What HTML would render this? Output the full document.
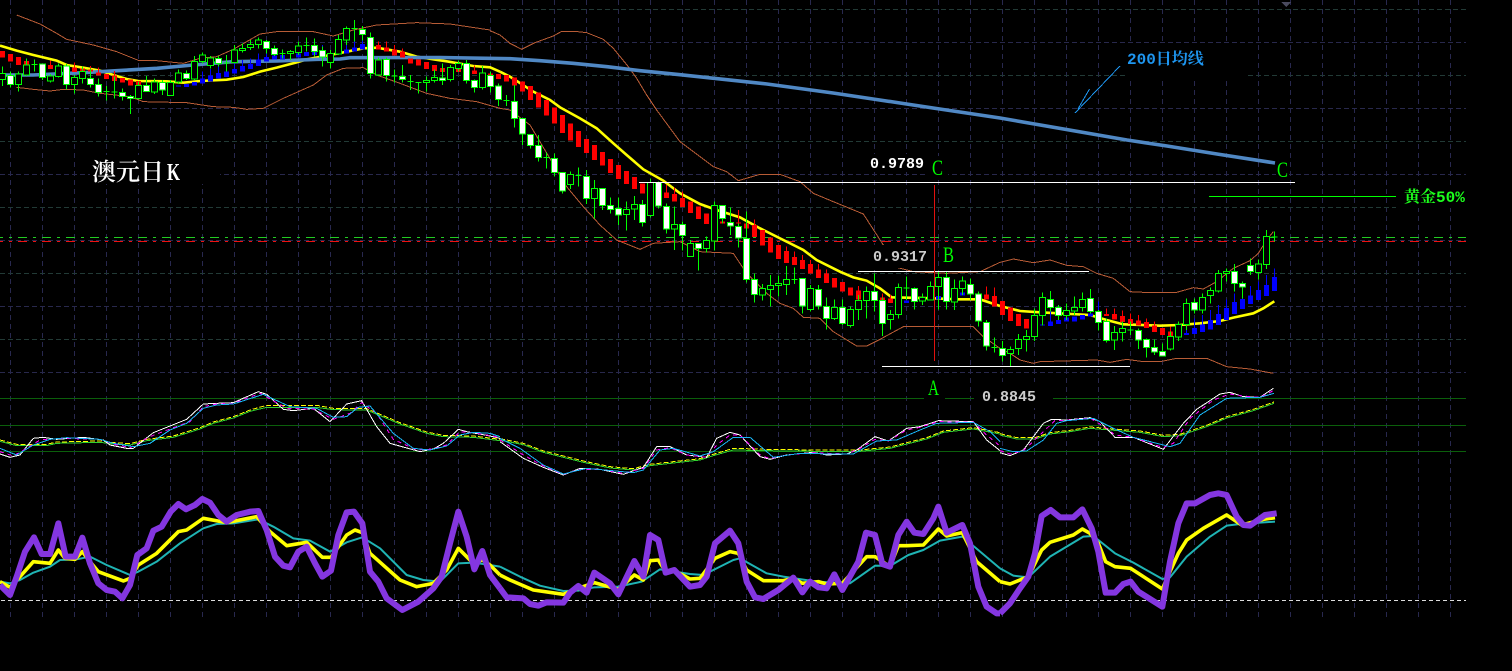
<!DOCTYPE html>
<html lang="zh">
<head>
<meta charset="utf-8">
<title>澳元日K</title>
<style>
html,body{margin:0;padding:0;background:#000;width:1512px;height:671px;overflow:hidden}
svg{display:block;position:absolute;left:0;top:0}
.z *{vector-effect:non-scaling-stroke}
.l{fill:none}
text{white-space:pre}
</style>
</head>
<body>
<svg width="1512" height="671" viewBox="0 0 1512 671" shape-rendering="crispEdges" xmlns="http://www.w3.org/2000/svg">
<rect width="1512" height="671" fill="#000"/>

<!-- grid -->
<path fill="none" stroke="#28284e" stroke-width="1" stroke-dasharray="5 4" d="M10.5 0V620M42.5 0V620M74.5 0V620M106.5 0V620M138.5 0V620M170.5 0V620M202.5 0V620M234.5 0V620M266.5 0V620M298.5 0V620M330.5 0V620M362.5 0V620M394.5 0V620M426.5 0V620M458.5 0V620M490.5 0V620M522.5 0V620M554.5 0V620M586.5 0V620M618.5 0V620M650.5 0V620M682.5 0V620M714.5 0V620M746.5 0V620M778.5 0V620M810.5 0V620M842.5 0V620M874.5 0V620M906.5 0V620M938.5 0V620M970.5 0V620M1002.5 0V620M1034.5 0V620M1066.5 0V620M1098.5 0V620M1130.5 0V620M1162.5 0V620M1194.5 0V620M1226.5 0V620M1258.5 0V620M1290.5 0V620M1322.5 0V620M1354.5 0V620M1386.5 0V620M1418.5 0V620M1450.5 0V620"/>
<path fill="none" stroke="#223a36" stroke-width="1" stroke-dasharray="5 3" d="M157 9.5H1466M0 75.5H1466M0 141.5H1466M0 207.5H1466M0 273.5H1466M0 339.5H1466"/>
<path fill="none" stroke="#28284c" stroke-width="1" stroke-dasharray="5 3" d="M0 42.5H1466M0 108.5H1466M0 174.5H1466M0 240.5H1466M0 306.5H1466M0 372.5H1466"/>

<!-- indicator-pane horizontals -->
<path fill="none" stroke="#0b5f0b" stroke-width="1" d="M0 398.5H1466M0 425.5H1466M0 451.5H1466"/>
<path fill="none" stroke="#ddd" stroke-width="1" stroke-dasharray="4 3" d="M1 600.5H1466"/>
<path fill="none" stroke="#22cc22" stroke-width="1" stroke-dasharray="9 6 3 6" stroke-dashoffset="6" d="M0 237.5H1466"/>
<path fill="none" stroke="#ee1111" stroke-width="1" stroke-dasharray="9 6 3 6" stroke-dashoffset="6" d="M0 241.5H1466"/>

<!-- Bollinger bands -->
<g class="z" stroke="#b85c36" stroke-width="1" fill="none">
<g transform="scale(.33333)">
<polyline points="50,45 120,72 170,100 200,118 280,135 350,155 415,181 470,182 550,190 600,175 650,170 700,148 780,102 830,95 940,95 1000,108 1060,90 1130,75 1250,68 1350,72 1470,90"/>
<polyline points="50,262 100,268 150,273 190,268 250,270 300,280 390,290 430,305 560,308 640,320 700,322 740,328 790,325 850,295 940,255 980,225 1030,205 1090,203 1130,225 1200,250 1280,280 1350,295 1430,305 1500,325"/>
</g>
<g transform="translate(440 0) scale(.33333)">
<polyline points="150,92 180,105 210,130 245,148 285,128 340,108 365,94 405,94 440,98 490,118 520,145 565,200 590,235 620,285 650,330"/>
</g>
<g transform="translate(500 60) scale(.33333)">
<polyline points="470,150 540,245 640,320 680,335 715,362 780,343 840,343 900,365 940,400 1000,425 1090,462 1150,555 1190,622 1240,635 1340,640 1440,635 1500,607"/>
<polyline points="0,145 30,150 90,195 200,380 250,440 300,495 350,540 420,568 460,550 540,545 600,575 700,580 740,640 800,700 840,730 880,745 910,772 960,775 1000,815 1070,858 1100,858 1140,838 1210,800 1300,800 1420,800 1450,830 1500,865"/>
</g>
<g transform="translate(1000 140) scale(.33333)">
<polyline points="0,367 40,357 100,368 150,360 200,376 250,380 290,400 340,415 390,455 450,458 530,457 580,443 610,447 650,425 700,385 750,362 775,340 800,300 820,275"/>
<polyline points="0,625 30,640 60,660 100,670 120,665 290,660 330,667 380,658 430,665 480,665 530,655 620,655 680,680 750,687 820,700"/>
</g>
</g>

<!-- yellow MA -->
<g class="z" stroke="#ffff00" stroke-width="2.6" fill="none" shape-rendering="auto">
<g transform="scale(.33333)"><polyline points="0,137 50,152 100,165 170,182 200,195 250,203 300,212 340,225 380,237 415,243 500,244 550,248 600,243 680,239 730,231 780,215 830,203 890,187 920,178 990,165 1040,155 1090,145 1130,143 1200,155 1250,170 1300,178 1340,184 1420,198 1470,202 1500,215"/></g>
<g transform="translate(500 60) scale(.33333)"><polyline points="0,35 30,50 100,95 150,120 180,142 240,175 290,205 340,250 380,285 430,328 490,362 540,400 600,432 650,450 720,472 780,505 850,540 910,570 950,600 1020,635 1060,652 1100,662 1140,685 1175,712 1300,715 1370,718 1440,718 1500,738"/></g>
<g transform="translate(1000 140) scale(.33333)"><polyline points="0,498 60,513 120,517 270,525 320,540 370,553 480,557 540,555 600,550 660,543 700,533 760,520 790,505 823,484"/></g>
</g>

<!-- 200 day MA -->
<polyline fill="none" stroke="#5088c4" stroke-width="3.6" shape-rendering="auto" points="0,75 33,75 83,72.7 117,70.7 157,68.3 193,65 233,61.7 277,61 317,59.3 340,59 350,57.7 440,57.5 510,58.7 540,60.7 573,63.3 607,66.7 640,70.7 680,74.7 767,84 833,93 900,103 933,108 1000,118 1127,140 1167,146 1217,154 1275,163"/>

<!-- red / blue blocks and candles -->
<g class="z">
<g transform="scale(.33333)">
<path fill="none" stroke="#f00" d="M79.5 175V183M103.5 178V190M151.5 182V195M223.5 188V203M271.5 198V208M295.5 203V218M343.5 213V227M1135.5 125V135M1159.5 125V142M1183.5 135V148M1207.5 145V155M1327.5 190V204M1375.5 190V207M1423.5 197V212M1447.5 198V218M1471.5 215V220"/>
<path fill="#f00" d="M0 153h15V173h-15zM24 162h15V185h-15zM48 171h15V195h-15zM72 183h15V195h-15zM144 195h15V207h-15zM216 203h15V216h-15zM240 205h15V213h-15zM264 208h15V215h-15zM288 218h15V227h-15zM312 222h15V237h-15zM336 227h15V243h-15zM360 234h15V248h-15zM384 238h15V257h-15zM408 243h15V255h-15zM1128 135h15V148h-15zM1152 142h15V155h-15zM1176 148h15V167h-15zM1200 155h15V172h-15zM1224 176h15V190h-15zM1248 178h15V197h-15zM1272 186h15V207h-15zM1296 195h15V213h-15zM1320 204h15V216h-15zM1368 207h15V216h-15zM1416 212h15V222h-15zM1440 218h15V225h-15zM1464 220h15V228h-15zM1488 222h15V237h-15z"/>
<path fill="none" stroke="#00f" d="M607.5 215V235M631.5 207V226M655.5 195V219M679.5 190V214M703.5 190V207M727.5 180V198M751.5 175V192M775.5 160V178M799.5 160V171M847.5 148V165M967.5 135V150M943.5 130V155M1039.5 130V148M1063.5 120V142M1087.5 122V132"/>
<path fill="#00f" d="M528 257h15V260h-15zM552 252h15V261h-15zM576 246h15V257h-15zM600 235h15V251h-15zM624 226h15V245h-15zM648 219h15V236h-15zM672 214h15V231h-15zM696 207h15V221h-15zM720 198h15V215h-15zM744 192h15V207h-15zM768 178h15V198h-15zM792 171h15V185h-15zM816 167h15V178h-15zM840 165h15V178h-15zM888 160h15V172h-15zM912 156h15V168h-15zM936 155h15V165h-15zM960 150h15V165h-15zM1032 148h15V160h-15zM1056 142h15V155h-15zM1080 132h15V148h-15z"/>
<path fill="none" stroke="#0f0" d="M7.5 200V258M31.5 215V262M55.5 215V275M79.5 175V228M103.5 178V215M127.5 190V240M151.5 222V248M175.5 190V232M199.5 192V268M223.5 225V280M247.5 200V250M271.5 205V262M295.5 235V290M319.5 258V302M343.5 230V296M367.5 265V302M391.5 285V342M415.5 245V298M439.5 228V275M463.5 235V282M487.5 240V285M511.5 240V288M535.5 208V252M559.5 212V240M583.5 168V240M607.5 158V190M631.5 168V205M655.5 168V200M679.5 165V215M703.5 135V190M727.5 130V158M751.5 120V150M775.5 112V145M799.5 120V160M823.5 136V168M847.5 148V175M871.5 150V180M895.5 125V165M919.5 112V155M943.5 115V170M967.5 140V200M991.5 150V205M1015.5 105V165M1039.5 80V135M1063.5 60V125M1087.5 78V122M1111.5 97V235M1135.5 172V228M1159.5 172V245M1183.5 208V248M1207.5 195V248M1231.5 225V270M1255.5 246V280M1279.5 230V275M1303.5 208V248M1327.5 190V255M1351.5 195V245M1375.5 182V215M1399.5 180V250M1423.5 238V278M1447.5 198V268M1471.5 215V278M1495.5 250V318"/>
<path fill="#000" stroke="#0f0" d="M-1.5 220h18V238h-18zM46.5 222h18V254h-18zM70.5 195h18V225h-18zM142.5 228h18V243h-18zM166.5 198h18V230h-18zM214.5 233h18V254h-18zM238.5 214h18V235h-18zM406.5 256h18V296h-18zM454.5 246h18V276h-18zM502.5 247h18V287h-18zM526.5 219h18V246h-18zM574.5 184h18V237h-18zM598.5 165h18V185h-18zM622.5 174h18V197h-18zM694.5 150h18V188h-18zM718.5 145h18V152h-18zM742.5 134h18V142h-18zM766.5 120h18V133h-18zM862.5 154h18V160h-18zM886.5 138h18V158h-18zM982.5 160h18V188h-18zM1006.5 118h18V162h-18zM1030.5 85h18V120h-18zM1126.5 180h18V225h-18zM1270.5 241h18V247h-18zM1294.5 232h18V242h-18zM1342.5 202h18V239h-18zM1366.5 190h18V205h-18zM1438.5 219h18V263h-18z"/>
<path fill="#fff" stroke="#0f0" d="M22.5 226h18V254h-18zM118.5 192h18V232h-18zM190.5 198h18V254h-18zM262.5 235h18V254h-18zM286.5 253h18V278h-18zM358.5 278h18V290h-18zM382.5 289h18V295h-18zM430.5 256h18V275h-18zM478.5 247h18V270h-18zM550.5 220h18V236h-18zM646.5 176h18V191h-18zM790.5 124h18V146h-18zM814.5 145h18V164h-18zM934.5 136h18V154h-18zM958.5 151h18V171h-18zM1078.5 88h18V103h-18zM1102.5 112h18V220h-18zM1150.5 178h18V226h-18zM1198.5 229h18V239h-18zM1318.5 234h18V242h-18zM1390.5 190h18V241h-18zM1414.5 241h18V262h-18zM1462.5 226h18V260h-18zM1486.5 258h18V298h-18z"/>
<path fill="none" stroke="#0f0" d="M94.5 193h18M310.5 274h18M334.5 276h18M670.5 189h18M838.5 161h18M910.5 137h18M1054.5 86h18M1174.5 228h18M1222.5 245h18M1246.5 247h18"/>
</g>

<g transform="translate(500 60) scale(.33333)">
<path fill="none" stroke="#f00" d="M499.5 375V397M523.5 383V402M547.5 395V414M715.5 450V487M739.5 455V490M763.5 478V495M859.5 560V573M883.5 575V591M907.5 585V600M931.5 600V612M955.5 612V628M979.5 628V640M1075.5 678V692M1147.5 700V712M1171.5 705V715M1459.5 680V703M1483.5 682V708"/>
<path fill="#f00" d="M12 45h15V65h-15zM36 52h15V77h-15zM60 65h15V95h-15zM84 78h15V120h-15zM108 98h15V143h-15zM132 120h15V167h-15zM156 142h15V191h-15zM180 165h15V219h-15zM204 190h15V242h-15zM228 213h15V261h-15zM252 237h15V279h-15zM276 255h15V300h-15zM300 276h15V317h-15zM324 297h15V339h-15zM348 315h15V357h-15zM372 333h15V372h-15zM396 351h15V387h-15zM420 370h15V400h-15zM492 397h15V414h-15zM516 402h15V425h-15zM540 414h15V441h-15zM564 424h15V459h-15zM588 440h15V477h-15zM612 460h15V492h-15zM660 484h15V491h-15zM708 487h15V491h-15zM732 490h15V505h-15zM756 495h15V531h-15zM780 510h15V556h-15zM804 533h15V578h-15zM828 555h15V597h-15zM852 573h15V609h-15zM876 591h15V615h-15zM900 600h15V627h-15zM924 612h15V641h-15zM948 628h15V654h-15zM972 640h15V669h-15zM996 654h15V683h-15zM1020 666h15V695h-15zM1044 682h15V707h-15zM1068 692h15V718h-15zM1140 712h15V722h-15zM1164 715h15V729h-15zM1452 703h15V719h-15zM1476 708h15V740h-15z"/>
<path fill="none" stroke="#00f" d="M1315.5 695V708M1387.5 685V698"/>
<path fill="#00f" d="M1212 722h15V729h-15zM1308 708h15V718h-15zM1380 698h15V707h-15z"/>
<path fill="none" stroke="#0f0" d="M19.5 105V138M43.5 75V203M67.5 175V255M91.5 222V265M115.5 225V305M139.5 278V325M163.5 280V350M187.5 337V400M211.5 335V387M235.5 322V380M259.5 330V432M283.5 360V475M307.5 385V450M331.5 412V460M355.5 412V495M379.5 425V512M403.5 408V480M427.5 420V500M451.5 355V472M475.5 365V445M499.5 430V520M523.5 440V570M547.5 485V572M571.5 540V590M595.5 550V632M619.5 530V578M643.5 425V572M667.5 437V490M691.5 443V525M715.5 490V562M739.5 455V668M763.5 640V728M787.5 672V722M811.5 645V740M835.5 647V710M859.5 618V705M883.5 622V672M907.5 655V760M931.5 675V755M955.5 675V748M979.5 712V808M1003.5 718V780M1027.5 718V795M1051.5 740V802M1075.5 705V780M1099.5 680V775M1123.5 640V755M1147.5 712V828M1171.5 750V808M1195.5 670V775M1219.5 650V720M1243.5 682V748M1267.5 700V735M1291.5 665V722M1315.5 635V748M1339.5 635V748M1363.5 658V750M1387.5 650V705M1411.5 655V720M1435.5 695V800M1459.5 780V872M1483.5 832V878"/>
<path fill="#000" stroke="#0f0" d="M202.5 344h18V373h-18zM274.5 385h18V415h-18zM370.5 449h18V463h-18zM394.5 433h18V447h-18zM442.5 368h18V467h-18zM514.5 494h18V507h-18zM562.5 550h18V590h-18zM610.5 541h18V566h-18zM634.5 437h18V543h-18zM778.5 685h18V705h-18zM802.5 677h18V688h-18zM826.5 670h18V676h-18zM850.5 658h18V673h-18zM922.5 685h18V748h-18zM994.5 742h18V775h-18zM1042.5 748h18V797h-18zM1066.5 722h18V748h-18zM1090.5 695h18V722h-18zM1162.5 764h18V778h-18zM1186.5 683h18V763h-18zM1258.5 713h18V723h-18zM1282.5 680h18V720h-18zM1306.5 652h18V680h-18zM1354.5 685h18V726h-18zM1378.5 663h18V685h-18z"/>
<path fill="#fff" stroke="#0f0" d="M34.5 125h18V175h-18zM58.5 176h18V222h-18zM82.5 224h18V257h-18zM106.5 257h18V292h-18zM154.5 295h18V337h-18zM178.5 338h18V393h-18zM250.5 350h18V415h-18zM298.5 385h18V437h-18zM322.5 437h18V448h-18zM346.5 445h18V465h-18zM418.5 433h18V487h-18zM466.5 368h18V438h-18zM490.5 440h18V507h-18zM538.5 493h18V526h-18zM586.5 551h18V565h-18zM658.5 437h18V475h-18zM682.5 488h18V498h-18zM706.5 500h18V534h-18zM730.5 535h18V658h-18zM754.5 658h18V703h-18zM898.5 656h18V738h-18zM946.5 689h18V738h-18zM970.5 740h18V775h-18zM1018.5 742h18V790h-18zM1114.5 695h18V722h-18zM1138.5 722h18V790h-18zM1234.5 686h18V724h-18zM1330.5 653h18V725h-18zM1402.5 673h18V702h-18zM1426.5 702h18V783h-18zM1450.5 788h18V858h-18z"/>
<path fill="none" stroke="#0f0" d="M10.5 122h18M130.5 292h18M226.5 346h18M874.5 659h18M1210.5 684h18M1474.5 862h18"/>
</g>

<g transform="translate(1000 140) scale(.33333)">
<path fill="none" stroke="#f00" d="M319.5 505V522M343.5 505V522M367.5 512V528M391.5 520V537M415.5 525V541M439.5 535V546M463.5 545V556M511.5 560V574"/>
<path fill="#f00" d="M0 483h15V525h-15zM24 502h15V543h-15zM48 522h15V558h-15zM72 537h15V565h-15zM312 522h15V528h-15zM336 522h15V538h-15zM360 528h15V546h-15zM384 537h15V552h-15zM408 541h15V557h-15zM432 546h15V564h-15zM456 556h15V576h-15zM480 564h15V585h-15zM504 574h15V590h-15z"/>
<path fill="none" stroke="#00f" d="M127.5 540V554M151.5 515V544M295.5 485V515M559.5 550V579M583.5 535V564M607.5 525V553M631.5 510V540M655.5 495V522M679.5 478V504M703.5 460V486M727.5 450V477M751.5 438V466M775.5 425V450M799.5 405V435M823.5 385V411"/>
<path fill="#00f" d="M120 554h15V557h-15zM144 544h15V558h-15zM168 540h15V552h-15zM192 533h15V545h-15zM216 530h15V544h-15zM240 525h15V538h-15zM264 520h15V530h-15zM552 579h15V585h-15zM576 564h15V582h-15zM600 553h15V576h-15zM624 540h15V568h-15zM648 522h15V555h-15zM672 504h15V540h-15zM696 486h15V522h-15zM720 477h15V507h-15zM744 466h15V492h-15zM768 450h15V480h-15zM792 435h15V468h-15zM816 411h15V453h-15z"/>
<path fill="none" stroke="#0f0" d="M7.5 603V665M31.5 620V678M55.5 582V645M79.5 570V635M103.5 505V603M127.5 457V556M151.5 453V515M175.5 495V540M199.5 490V540M223.5 470V525M247.5 457V515M271.5 447V520M295.5 510V572M319.5 535V608M343.5 558V630M367.5 545V605M391.5 545V585M415.5 565V627M439.5 595V652M463.5 598V645M487.5 610V650M511.5 575V632M535.5 545V603M559.5 475V570M583.5 475V520M607.5 460V520M631.5 442V490M655.5 390V458M679.5 385V425M703.5 372V455M727.5 425V475M751.5 355V405M775.5 358V418M799.5 270V387M823.5 275V305"/>
<path fill="#000" stroke="#0f0" d="M22.5 628h18V640h-18zM46.5 598h18V626h-18zM70.5 589h18V598h-18zM94.5 526h18V590h-18zM118.5 472h18V527h-18zM190.5 512h18V527h-18zM214.5 502h18V513h-18zM238.5 478h18V502h-18zM334.5 578h18V600h-18zM358.5 565h18V578h-18zM502.5 589h18V627h-18zM526.5 553h18V591h-18zM550.5 490h18V554h-18zM598.5 472h18V510h-18zM622.5 451h18V467h-18zM646.5 400h18V453h-18zM670.5 395h18V400h-18zM766.5 372h18V398h-18zM790.5 289h18V374h-18z"/>
<path fill="#fff" stroke="#0f0" d="M-1.5 625h18V647h-18zM142.5 478h18V503h-18zM166.5 502h18V527h-18zM262.5 476h18V515h-18zM286.5 515h18V548h-18zM310.5 545h18V602h-18zM406.5 571h18V600h-18zM430.5 598h18V623h-18zM454.5 622h18V636h-18zM478.5 634h18V648h-18zM574.5 487h18V510h-18zM694.5 394h18V431h-18zM718.5 430h18V441h-18zM742.5 376h18V395h-18z"/>
<path fill="none" stroke="#0f0" d="M382.5 570h18M814.5 291h18"/>
</g>
</g>

<!-- upper oscillator pane -->
<g class="z" fill="none" stroke-width="1">
<g transform="translate(0 380) scale(.33333)">
<polyline stroke="#2fd02f" points="0,184 50,197 140,197 170,190 300,187 340,192 390,195 440,182 520,172 600,147 640,130 700,114 750,94 800,82 950,82 1000,89 1100,90 1200,132 1280,160 1330,170 1420,172 1500,182"/>
<polyline stroke="#ff0" stroke-dasharray="5 2" points="0,180 50,193 140,193 170,186 300,183 340,188 390,191 440,178 520,168 600,143 640,126 700,110 750,90 800,76 950,76 1000,85 1100,86 1200,128 1280,156 1330,166 1420,168 1500,178"/>
<polyline stroke="#fff" points="0,222 30,232 60,225 100,175 130,172 170,178 250,172 310,180 330,195 380,205 400,205 460,158 530,130 560,118 610,72 650,70 700,68 775,35 800,43 850,88 880,92 940,85 990,125 1040,72 1085,62 1130,140 1170,190 1260,215 1300,207 1330,190 1375,148 1400,155 1470,168 1500,175"/>
<polyline stroke="#f0f" stroke-dasharray="4 4" points="0,215 40,228 80,205 120,180 180,175 300,178 340,192 390,203 450,170 520,143 570,125 610,80 650,72 700,70 780,40 860,85 940,87 1000,118 1050,100 1085,68 1130,100 1180,178 1250,210 1300,207 1340,195 1380,155 1420,158 1500,172"/>
<polyline stroke="#19b5f5" points="0,205 50,225 100,195 150,178 200,173 300,178 340,190 400,200 450,190 510,150 560,130 610,85 650,75 700,72 790,43 870,80 950,85 1000,112 1040,110 1075,82 1110,78 1180,160 1240,205 1290,210 1340,198 1380,165 1420,157 1470,160 1500,170"/>
</g>
<g transform="translate(500 380) scale(.33333)">
<polyline stroke="#2fd02f" points="0,180 70,194 130,217 250,247 330,264 400,270 450,257 600,240 640,227 700,210 800,212 950,214 1080,214 1170,205 1280,177 1330,157 1420,147 1500,162"/>
<polyline stroke="#ff0" stroke-dasharray="5 2" points="0,176 70,190 130,213 250,243 330,260 400,266 450,253 600,236 640,223 700,205 800,208 950,210 1080,210 1170,201 1280,173 1330,153 1420,143 1500,158"/>
<polyline stroke="#fff" points="0,185 70,235 130,262 190,285 240,265 300,268 370,283 430,262 470,200 510,200 560,225 620,232 650,175 690,157 720,165 780,230 810,238 860,225 940,217 980,225 1040,222 1070,210 1125,170 1165,183 1220,145 1260,140 1315,122 1420,125 1460,180 1500,212"/>
<polyline stroke="#f0f" stroke-dasharray="4 4" points="0,180 70,225 130,258 190,283 240,268 300,268 370,280 430,265 470,210 510,203 560,225 620,232 650,195 690,165 720,165 780,225 810,236 860,225 940,218 1040,222 1080,205 1125,178 1165,183 1220,150 1260,142 1315,125 1420,126 1460,165 1500,198"/>
<polyline stroke="#19b5f5" points="0,175 60,205 130,255 190,282 260,265 400,278 430,270 480,210 520,205 600,228 640,215 700,172 750,172 820,232 900,220 1000,222 1060,222 1130,183 1190,180 1260,150 1310,130 1420,127 1470,155 1500,185"/>
</g>
<g transform="translate(1000 380) scale(.33333)">
<polyline stroke="#2fd02f" points="0,165 50,177 105,177 150,162 210,155 270,145 330,150 420,157 490,170 540,167 620,140 680,114 760,92 822,70"/>
<polyline stroke="#ff0" stroke-dasharray="5 2" points="0,161 50,173 105,173 150,158 210,151 270,141 330,146 420,153 490,166 540,163 620,136 680,110 760,88 822,66"/>
<polyline stroke="#fff" points="0,218 30,227 70,210 130,130 155,118 200,120 270,113 300,125 345,172 400,172 490,208 550,130 590,88 660,42 690,37 730,50 780,52 820,25"/>
<polyline stroke="#f0f" stroke-dasharray="4 4" points="0,212 30,222 70,212 130,155 165,122 200,121 270,114 320,145 345,165 400,172 490,203 520,190 570,115 640,60 690,42 730,48 780,52 820,32"/>
<polyline stroke="#19b5f5" points="0,205 40,215 80,213 130,180 170,130 200,122 280,115 340,145 400,172 510,200 540,190 600,105 680,55 780,52 822,40"/>
</g>
</g>

<!-- lower oscillator pane -->
<g class="z" fill="none" stroke-linejoin="round" shape-rendering="auto">
<g transform="translate(0 380) scale(.33333)">
<polyline stroke="#1fb4b4" stroke-width="2" points="0,605 30,610 60,600 100,578 150,560 180,540 230,538 270,530 320,555 390,585 415,575 470,545 540,490 610,445 650,432 700,430 775,418 820,440 880,475 930,482 990,515 1040,487 1087,472 1140,505 1220,585 1270,600 1320,605 1375,550 1423,548 1500,560"/>
<polyline stroke="#ff0" stroke-width="3.6" points="0,605 30,622 60,590 100,545 150,550 175,510 195,535 225,538 247,515 270,545 295,575 370,603 390,595 415,555 470,520 535,455 560,450 610,415 680,428 770,410 810,455 860,497 920,487 967,532 993,532 1040,465 1065,450 1087,458 1110,520 1200,600 1250,620 1300,610 1340,570 1375,505 1420,550 1447,540 1470,555 1500,585"/>
<polyline stroke="#8436e0" stroke-width="6" points="0,615 10,625 30,645 50,590 75,515 102,472 125,522 150,522 175,430 197,530 225,530 247,473 270,550 295,610 320,630 345,635 367,655 390,615 412,525 440,505 460,452 485,440 512,395 535,372 558,388 585,375 607,357 630,368 655,405 680,425 710,405 750,395 775,393 800,450 825,530 850,557 870,562 895,515 920,500 945,550 967,590 993,572 1015,465 1040,397 1062,395 1087,430 1110,575 1135,605 1160,655 1207,690 1255,665 1300,625 1325,590 1350,490 1375,395 1400,470 1423,568 1447,513 1470,585 1500,625"/>
</g>
<g transform="translate(500 380) scale(.33333)">
<polyline stroke="#1fb4b4" stroke-width="2" points="0,560 60,590 120,617 190,633 235,632 283,622 355,620 425,605 480,568 570,582 610,585 700,540 720,535 800,580 850,590 950,605 1050,610 1125,557 1170,558 1225,525 1270,510 1320,482 1387,470 1500,565"/>
<polyline stroke="#ff0" stroke-width="3.6" points="0,585 30,600 100,630 190,643 235,625 283,608 355,628 403,585 430,600 450,542 475,540 497,575 523,572 570,597 600,595 645,535 690,515 715,520 740,570 790,602 850,602 880,595 907,610 955,605 980,612 1027,610 1100,530 1125,530 1170,560 1195,497 1220,497 1270,495 1315,447 1340,468 1387,458 1430,545 1500,605"/>
<polyline stroke="#8436e0" stroke-width="6" points="0,625 20,652 70,655 90,672 115,677 140,667 190,668 210,638 235,618 260,638 283,578 330,610 355,643 403,543 430,590 450,465 475,480 497,578 523,570 570,620 600,615 620,590 645,490 690,452 715,490 740,605 765,652 790,657 835,630 880,593 907,637 930,605 955,622 980,625 1003,583 1027,630 1075,545 1098,458 1125,465 1147,552 1170,560 1195,465 1220,425 1243,458 1270,462 1300,415 1315,380 1340,458 1387,435 1410,490 1435,620 1460,680 1490,700 1500,700"/>
</g>
<g transform="translate(1000 380) scale(.33333)">
<polyline stroke="#1fb4b4" stroke-width="2" points="0,565 40,587 85,592 150,530 250,470 280,468 345,520 400,548 487,597 510,592 560,530 630,470 680,437 720,432 825,425"/>
<polyline stroke="#ff0" stroke-width="3.6" points="0,605 30,612 85,590 125,510 150,487 220,465 247,447 270,460 295,490 317,545 345,560 392,565 487,627 510,575 535,520 560,480 610,445 680,405 725,435 790,418 825,413"/>
<polyline stroke="#8436e0" stroke-width="6" points="0,700 30,670 60,625 85,590 105,520 125,408 152,390 180,412 220,412 247,388 275,445 295,515 317,638 345,638 370,612 392,605 415,635 487,680 510,545 535,430 560,370 585,370 630,345 655,340 680,345 710,410 730,435 750,437 795,405 830,400"/>
</g>
</g>

<!-- text boxes -->
<g fill="#000">
<rect x="90" y="155" width="130" height="29"/>
<rect x="866" y="154" width="62" height="18"/>
<rect x="928" y="156" width="20" height="21"/>
<rect x="870" y="245" width="60" height="23"/>
<rect x="940" y="245" width="16" height="23"/>
<rect x="924" y="378" width="21" height="25"/>
<rect x="974" y="382" width="79" height="26"/>
<rect x="1127" y="44" width="121" height="33"/>
<rect x="1396" y="187" width="70" height="21"/>
<rect x="1276" y="160" width="13" height="19"/>
</g>

<!-- annotation lines -->
<path fill="none" stroke="#fff" stroke-width="1" d="M639 182.5H1295M858 271.5H1089M882 366.5H1130"/>
<path fill="none" stroke="#e01010" stroke-width="1" d="M934.5 185V361"/>
<path fill="none" stroke="#0f0" stroke-width="1" d="M1209 196.5H1396"/>
<path fill="none" stroke="#1e96f0" stroke-width="1" d="M1120 66L1075 113M1089.5 89L1078 109"/>
<polygon points="1281,2 1291,2 1286,7" fill="#4a4a5e"/>

<!-- labels -->
<g shape-rendering="auto">
<text x="92" y="180" fill="#fff" font-size="24" font-weight="600" font-family="'Noto Serif CJK SC',serif">澳元日</text>
<text x="167" y="180" fill="#fff" font-size="24" font-weight="700" font-family="'Liberation Serif',serif" textLength="13" lengthAdjust="spacingAndGlyphs">K</text>
<g font-family="'Liberation Mono',monospace" font-weight="700" font-size="15">
<text x="870" y="168" fill="#fff">0.9789</text>
<text x="873" y="261" fill="#ccc">0.9317</text>
<text x="982" y="401" fill="#ccc">0.8845</text>
</g>
<g fill="#00ff00" font-family="'Liberation Serif',serif" font-size="22">
<text x="932" y="175" textLength="11" lengthAdjust="spacingAndGlyphs">C</text>
<text x="1277" y="177" textLength="11" lengthAdjust="spacingAndGlyphs">C</text>
<text x="943" y="262" textLength="11" lengthAdjust="spacingAndGlyphs">B</text>
<text x="928" y="395" textLength="11" lengthAdjust="spacingAndGlyphs">A</text>
</g>
<text x="1127" y="64" fill="#1e96f0" font-size="16" font-weight="700" font-family="'Liberation Mono','Noto Serif CJK SC',serif">200日均线</text>
<text x="1404" y="202" fill="#1cff1c" font-size="16" font-weight="700" font-family="'Liberation Mono','Noto Serif CJK SC',serif">黄金50%</text>
</g>
</svg>
</body>
</html>
